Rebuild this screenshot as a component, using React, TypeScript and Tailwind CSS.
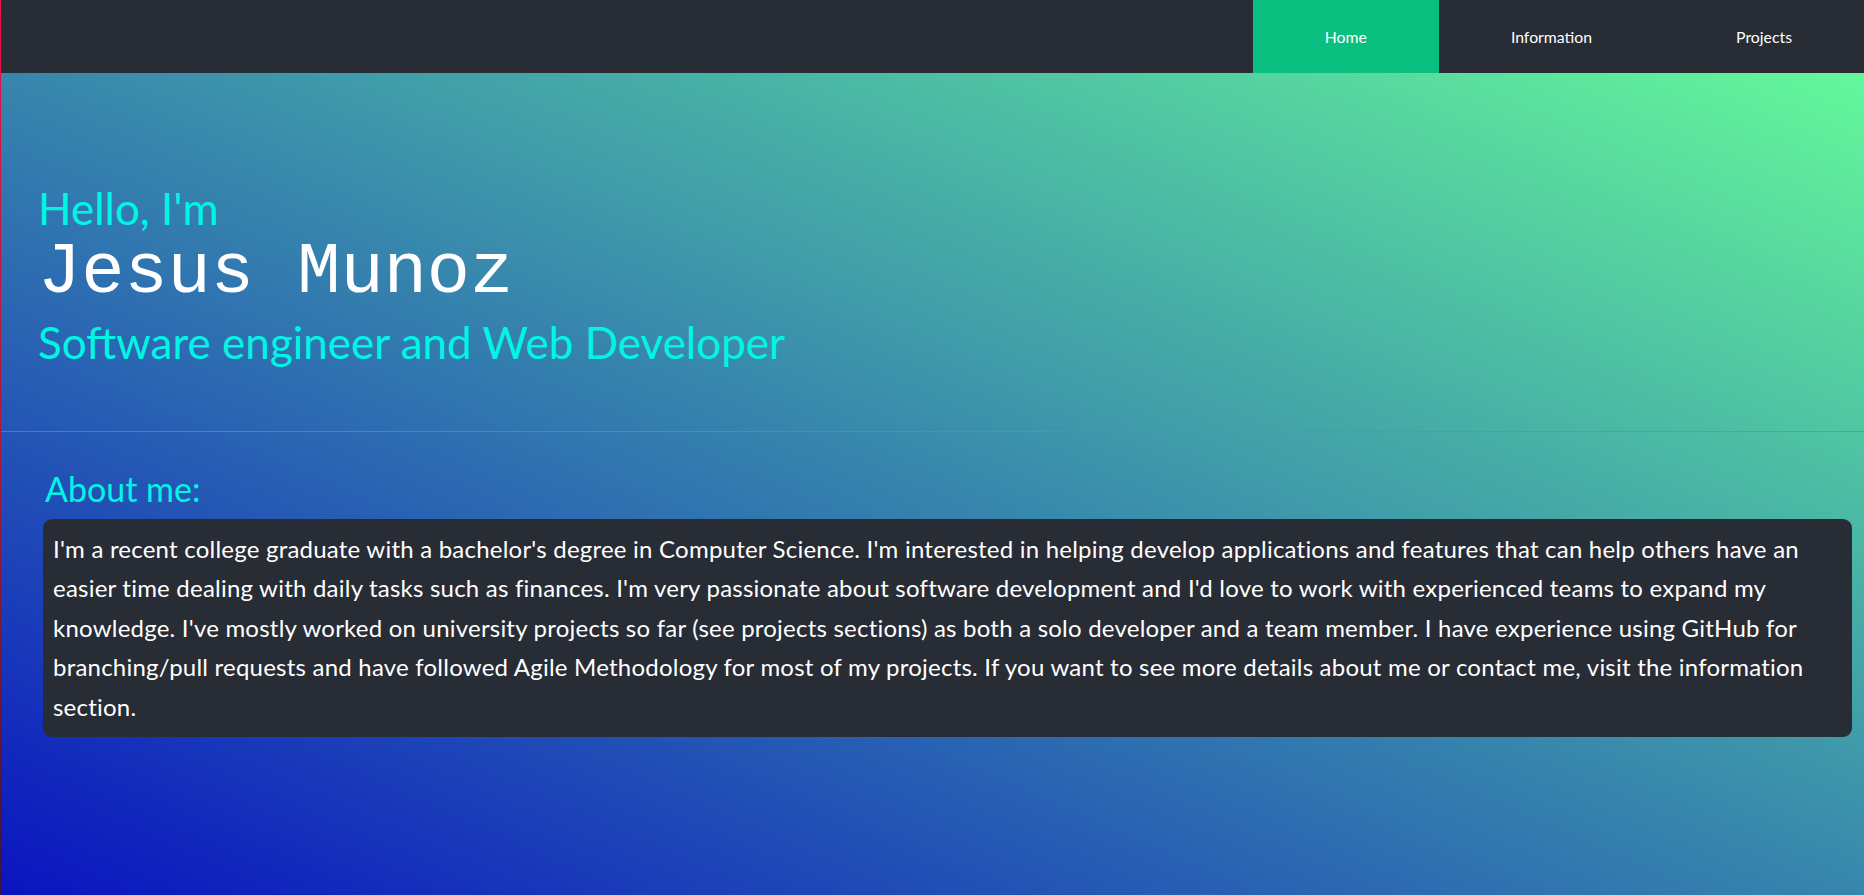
import React from 'react';

const navLinks = ['Home', 'Information', 'Projects'];

const about =
  "I'm a recent college graduate with a bachelor's degree in Computer Science. I'm interested in helping develop applications and features that can help others have an easier time dealing with daily tasks such as finances. I'm very passionate about software development and I'd love to work with experienced teams to expand my knowledge. I've mostly worked on university projects so far (see projects sections) as both a solo developer and a team member. I have experience using GitHub for branching/pull requests and have followed Agile Methodology for most of my projects. If you want to see more details about me or contact me, visit the information section.";

export default function App() {
  return (
    <div className="flex min-h-[895px] w-full" style={{ fontFamily: 'Lato, "Open Sans", sans-serif' }}>
      {/* thin red edge on the left */}
      <div className="w-px shrink-0 bg-[linear-gradient(to_bottom,#ec1248,#a8183c_50%,#3a1238)]" />

      <div className="flex flex-1 flex-col min-w-0">
        {/* Nav */}
        <nav className="flex h-[73px] justify-end bg-[#282c35]">
          {navLinks.map((l, i) => (
            <a
              key={l}
              href="#"
              className={`flex items-center px-[72px] pt-px text-[15.8px] text-white ${i === 0 ? 'bg-[#0abf80]' : ''}`}
            >
              {l}
            </a>
          ))}
        </nav>

        <main className="flex flex-1 flex-col bg-[linear-gradient(to_top_right,#0a14c0,#64f89a)]">
          {/* Hero */}
          <section className="box-border flex h-[359px] flex-col border-b border-[#2fa0d8]/70 pl-[37px] pt-[113px]">
            <h2 className="text-[44px] leading-none text-[#00f6e4]">Hello, I'm</h2>
            <h1
              className="mt-[7px] text-[72px] leading-none text-white"
              style={{ fontFamily: '"Liberation Mono", "Courier New", monospace' }}
            >
              Jesus Munoz
            </h1>
            <h3 className="mt-[11px] text-[44px] leading-none text-[#00f6e4]">Software engineer and Web Developer</h3>
          </section>

          {/* About */}
          <section className="flex flex-col pl-[42px] pr-[12px] pt-[40px] pb-[40px]">
            <h2 className="ml-[2px] text-[34px] leading-none text-[#00f6e4]">About me:</h2>
            <div className="mt-[13px] rounded-[9px] bg-[#282c35] px-[10px] pt-[10px] pb-[11px]">
              <p className="text-[24px] leading-[39.4px] tracking-[0.22px] text-white">{about}</p>
            </div>
          </section>
        </main>
      </div>
    </div>
  );
}
